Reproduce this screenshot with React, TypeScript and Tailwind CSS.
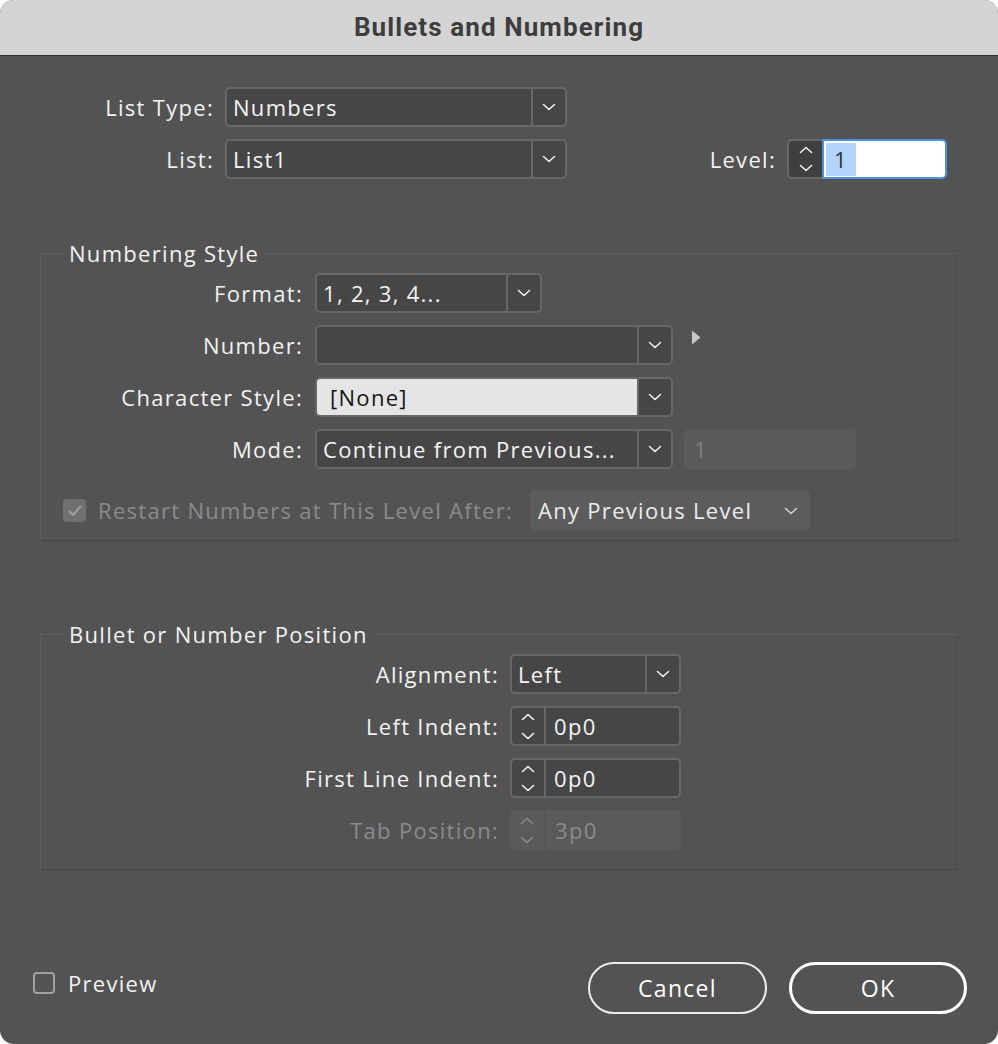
import React from 'react'

function ChevronDown({ className = '' }: { className?: string }) {
  return (
    <svg className={className} width="14" height="8" viewBox="0 0 14 8" fill="none" stroke="currentColor" strokeWidth="1.6" strokeLinecap="round" strokeLinejoin="round">
      <path d="M1.5 1.5 7 6.5l5.5-5" />
    </svg>
  )
}

function ChevronUp({ className = '' }: { className?: string }) {
  return (
    <svg className={className} width="14" height="8" viewBox="0 0 14 8" fill="none" stroke="currentColor" strokeWidth="1.6" strokeLinecap="round" strokeLinejoin="round">
      <path d="M1.5 6.5 7 1.5l5.5 5" />
    </svg>
  )
}

function Select({ value, className = '', light = false }: { value: string; className?: string; light?: boolean }) {
  return (
    <div className={`flex h-[40px] rounded-[5px] border-2 border-[#676767] bg-[#464646] overflow-hidden ${className}`}>
      <div
        className={`flex-1 flex items-center text-[22px] whitespace-nowrap ${
          light ? 'bg-[#e5e5e5] text-[#151515] pl-[13px]' : 'text-[#f4f4f4] pl-[6px]'
        }`}
      >
        {value}
      </div>
      <div className="w-[34px] flex items-center justify-center border-l-2 border-[#676767] text-[#f0f0f0]">
        <ChevronDown />
      </div>
    </div>
  )
}

function Stepper({ value, disabled = false }: { value: string; disabled?: boolean }) {
  if (disabled) {
    return (
      <div className="flex h-[40px] w-[171px] rounded-[5px] bg-[#5a5a5a] text-[#8b8b8b]">
        <div className="w-[36px] flex flex-col items-center justify-center gap-[11px] border-r-2 border-[#555]">
          <ChevronUp />
          <ChevronDown />
        </div>
        <div className="flex-1 flex items-center pl-[9px] text-[22px]">{value}</div>
      </div>
    )
  }
  return (
    <div className="flex h-[40px] w-[171px] rounded-[5px] border-2 border-[#676767] bg-[#464646] text-[#f4f4f4]">
      <div className="w-[34px] flex flex-col items-center justify-center gap-[11px] border-r-2 border-[#676767]">
        <ChevronUp />
        <ChevronDown />
      </div>
      <div className="flex-1 flex items-center pl-[8px] text-[22px]">{value}</div>
    </div>
  )
}

function Row({ label, labelW, gap, children, dim = false }: { label: string; labelW: string; gap: string; children: React.ReactNode; dim?: boolean }) {
  return (
    <div className={`flex items-center ${gap}`}>
      <div className={`${labelW} text-right text-[22px] whitespace-nowrap ${dim ? 'text-[#8b8b8b]' : 'text-[#f2f2f2]'}`}>{label}</div>
      {children}
    </div>
  )
}

function GroupTitle({ children }: { children: React.ReactNode }) {
  return (
    <div className="-mt-[16px] ml-[24px] w-fit px-[4px] bg-[#535353] text-[22px] leading-[30px] text-[#f2f2f2]">{children}</div>
  )
}

export default function App() {
  return (
    <div className="w-[998px] h-[1044px] bg-white font-['Open_Sans',sans-serif] tracking-[1.3px]">
      <div className="flex flex-col h-full rounded-[14px] overflow-hidden bg-[#535353]">
        {/* Title bar */}
        <div className="h-[56px] shrink-0 flex items-center justify-center bg-[#d4d4d4] border-b border-[#2f2f2f]">
          <span className="font-['Roboto',sans-serif] font-bold text-[26px] tracking-[1.1px] text-[#3d3d3d]">Bullets and Numbering</span>
        </div>

        <div className="flex-1 flex flex-col pt-[31px] pl-[40px] pr-[41px]">
          {/* List type / list / level */}
          <div className="flex flex-col gap-[12px]">
            <Row label="List Type:" labelW="w-[174px]" gap="gap-[11px]">
              <Select value="Numbers" className="w-[342px]" />
            </Row>
            <div className="flex items-center">
              <Row label="List:" labelW="w-[174px]" gap="gap-[11px]">
                <Select value="List1" className="w-[342px]" />
              </Row>
              <div className="flex-1" />
              <span className="text-[22px] text-[#f2f2f2]">Level:</span>
              <div className="ml-[11px] mr-[10px] flex h-[40px]">
                <div className="w-[35px] flex flex-col items-center justify-center gap-[10px] rounded-l-[5px] border-2 border-r-0 border-[#676767] bg-[#3f3f3f] text-[#eee]">
                  <ChevronUp />
                  <ChevronDown />
                </div>
                <div className="w-[125px] flex items-center pl-[2px] rounded-r-[5px] border-2 border-[#4d8fe0] bg-white text-[22px] text-[#333]">
                  <span className="bg-[#b3d4fc] px-[8px]">1</span>
                </div>
              </div>
            </div>
          </div>

          {/* Numbering Style */}
          <div className="mt-[74px] border border-[#5f5f5f] border-b-[#474747] border-r-[#4c4c4c] pb-[9px]">
            <GroupTitle>Numbering Style</GroupTitle>
            <div className="mt-[5px] flex flex-col gap-[12px]">
              <Row label="Format:" labelW="w-[262px]" gap="gap-[12px]">
                <Select value="1, 2, 3, 4..." className="w-[227px]" />
              </Row>
              <Row label="Number:" labelW="w-[262px]" gap="gap-[12px]">
                <Select value="" className="w-[358px]" />
                <svg width="10" height="15" viewBox="0 0 10 15" className="ml-[6px] -mt-[16px]">
                  <path d="M1 0.5 9.5 7.5 1 14.5z" fill="#c9c9c9" />
                </svg>
              </Row>
              <Row label="Character Style:" labelW="w-[262px]" gap="gap-[12px]">
                <Select value="[None]" light className="w-[358px]" />
              </Row>
              <Row label="Mode:" labelW="w-[262px]" gap="gap-[12px]">
                <Select value="Continue from Previous..." className="w-[358px]" />
                <div className="ml-[-1px] w-[172px] h-[40px] rounded-[5px] bg-[#5a5a5a] flex items-center pl-[10px] text-[22px] text-[#7f7f7f]">1</div>
              </Row>
              <div className="mt-[9px] flex items-center pl-[22px]">
                <div className="w-[23px] h-[23px] rounded-[4px] bg-[#707070] flex items-center justify-center">
                  <svg width="14" height="12" viewBox="0 0 14 12" fill="none" stroke="#9d9d9d" strokeWidth="2.2" strokeLinecap="round" strokeLinejoin="round">
                    <path d="M1.5 6.5 5 10l7.5-8.5" />
                  </svg>
                </div>
                <span className="ml-[12px] w-[420px] text-[22px] text-[#8b8b8b] whitespace-nowrap">Restart Numbers at This Level After:</span>
                <div className="ml-[12px] w-[280px] h-[41px] rounded-[5px] bg-[#5c5c5c] flex items-center pl-[8px] pr-[12px] text-[22px] text-[#ececec]">
                  <span className="flex-1 whitespace-nowrap">Any Previous Level</span>
                  <ChevronDown className="text-[#cfcfcf]" />
                </div>
              </div>
            </div>
          </div>

          {/* Bullet or Number Position */}
          <div className="mt-[93px] border border-[#5f5f5f] border-b-[#474747] border-r-[#4c4c4c] pb-[19px]">
            <GroupTitle>Bullet or Number Position</GroupTitle>
            <div className="mt-[5px] flex flex-col gap-[12px]">
              <Row label="Alignment:" labelW="w-[458px]" gap="gap-[11px]">
                <Select value="Left" className="w-[171px]" />
              </Row>
              <Row label="Left Indent:" labelW="w-[458px]" gap="gap-[11px]">
                <Stepper value="0p0" />
              </Row>
              <Row label="First Line Indent:" labelW="w-[458px]" gap="gap-[11px]">
                <Stepper value="0p0" />
              </Row>
              <Row label="Tab Position:" labelW="w-[458px]" gap="gap-[11px]" dim>
                <Stepper value="3p0" disabled />
              </Row>
            </div>
          </div>

          {/* Footer */}
          <div className="mt-[92px] flex items-center">
            <div className="-mt-[10px] -ml-[7px] flex items-center">
              <div className="w-[22px] h-[22px] rounded-[4px] border-2 border-[#a0a0a0]" />
              <span className="ml-[13px] text-[22px] text-[#f2f2f2]">Preview</span>
            </div>
            <div className="flex-1" />
            <button className="w-[179px] h-[52px] rounded-full border-2 border-[#ececec] text-[23px] text-white">Cancel</button>
            <button className="ml-[22px] mr-[-10px] w-[178px] h-[52px] rounded-full border-[3px] border-white text-[23px] text-white">OK</button>
          </div>
        </div>
      </div>
    </div>
  )
}
